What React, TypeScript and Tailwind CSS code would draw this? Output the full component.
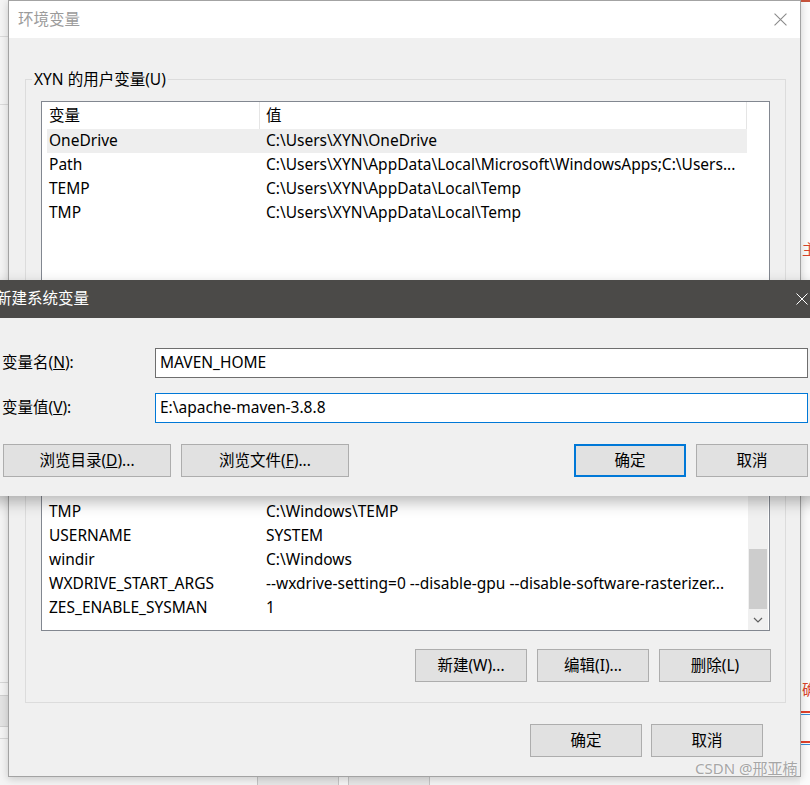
import clsx from "clsx";

const userVars = [
    {name: "OneDrive", value: "C:\\Users\\XYN\\OneDrive", selected: true},
    {name: "Path", value: "C:\\Users\\XYN\\AppData\\Local\\Microsoft\\WindowsApps;C:\\Users..."},
    {name: "TEMP", value: "C:\\Users\\XYN\\AppData\\Local\\Temp"},
    {name: "TMP", value: "C:\\Users\\XYN\\AppData\\Local\\Temp"},
];

const systemVars = [
    {name: "PROCESSOR_REVISION", value: "9a04"},
    {name: "PSModulePath", value: "%ProgramFiles%\\WindowsPowerShell\\Modules"},
    {name: "TEMP", value: "C:\\Windows\\TEMP"},
    {name: "TMP", value: "C:\\Windows\\TEMP"},
    {name: "USERNAME", value: "SYSTEM"},
    {name: "windir", value: "C:\\Windows"},
    {name: "WXDRIVE_START_ARGS", value: "--wxdrive-setting=0 --disable-gpu --disable-software-rasterizer..."},
    {name: "ZES_ENABLE_SYSMAN", value: "1"},
];

function WinButton({children, focused, className}: {children: React.ReactNode; focused?: boolean; className?: string}) {
    return (
        <div
            className={clsx(
                "flex items-center justify-center h-[33px] bg-[#e1e1e1] text-black",
                focused ? "border-2 border-[#0078d7]" : "border border-[#adadad]",
                className,
            )}
        >
            {children}
        </div>
    );
}

function Row({name, value, selected}: {name: string; value: string; selected?: boolean}) {
    return (
        <div className={clsx("flex h-[24px] shrink-0 items-center ml-[5px] w-[700px] whitespace-nowrap", selected && "bg-[#eeeeee]")}>
            <span className="w-[219px] pl-[2px] shrink-0">{name}</span>
            <span className="overflow-hidden">{value}</span>
        </div>
    );
}

function ListHeader() {
    return (
        <div className="flex h-[27px] items-center shrink-0">
            <div className="w-[218px] h-full flex items-center pl-[7px] border-r border-[#e5e5e5]">变量</div>
            <div className="w-[487px] h-full flex items-center pl-[6px] border-r border-[#e5e5e5]">值</div>
        </div>
    );
}

function GroupLabel({children}: {children: React.ReactNode}) {
    return <div className="-mt-[11px] ml-[6px] px-[2px] w-fit h-[20px] leading-[20px] bg-[#f0f0f0]">{children}</div>;
}

function CloseIcon({color, size}: {color: string; size: number}) {
    return (
        <svg width={size} height={size} viewBox="0 0 12 12">
            <path d="M0.5 0.5 L11.5 11.5 M11.5 0.5 L0.5 11.5" stroke={color} strokeWidth="1" />
        </svg>
    );
}

function Backdrop() {
    return (
        <>
            {/* left strip of the window behind */}
            <div className="absolute left-0 top-0 w-[10px] h-full bg-[#f4f4f4]">
                <div className="mt-[36px] h-px bg-[#dadada]" />
                <div className="mt-[67px] h-px bg-[#dadada]" />
                <div className="mt-[577px] h-px bg-[#d6d6d6]" />
                <div className="mt-[12px] h-[32px] bg-[#e3e3e3] border-y border-[#cfcfcf]" />
                <div className="mt-[11px] h-px bg-[#d6d6d6]" />
            </div>
            {/* right strip of the window behind */}
            <div className="absolute left-[800px] top-0 w-[10px] h-full bg-[#fbfbfb] overflow-hidden">
                <div className="h-[2px] bg-[#c8553d]" />
                <div className="mt-[240px] text-[15px] text-[#d9452b] leading-none pl-[2px] whitespace-nowrap">主</div>
                <div className="mt-[425px] text-[15px] text-[#d9452b] leading-none pl-[2px] whitespace-nowrap">确</div>
                <div className="mt-[14px] h-[2px] bg-[#e0412b]" />
                <div className="mt-[1px] h-[1px] bg-[#3c8fd8]" />
                <div className="mt-[26px] h-[2px] bg-[#e0412b]" />
                <div className="mt-[1px] h-[1px] bg-[#3c8fd8]" />
            </div>
            <div className="absolute left-[705px] top-0 w-[95px] h-[2px] bg-[#c8553d]" />
            {/* buttons of the dialog further behind */}
            <div className="absolute left-[257px] top-[776px] w-[82px] h-[24px] bg-[#e6e6e6] border border-[#c4c4c4] text-center text-[15px] text-[#555] leading-[30px] overflow-hidden">
                确定
            </div>
            <div className="absolute left-[348px] top-[776px] w-[82px] h-[24px] bg-[#e6e6e6] border border-[#c4c4c4] text-center text-[15px] text-[#555] leading-[30px] overflow-hidden">
                取消
            </div>
        </>
    );
}

function EnvDialog() {
    return (
        <div className="absolute left-[8px] top-0 w-[793px] h-[777px] border border-[#a3a3a3] bg-[#f0f0f0] flex flex-col shadow-[0_2px_8px_rgba(0,0,0,0.18)]">
            <div className="h-[37px] shrink-0 bg-white flex items-center justify-between pl-[9px] pr-[13px]">
                <span className="text-[#9b9b9b]">环境变量</span>
                <CloseIcon color="#8a8a8a" size={13} />
            </div>

            <div className="ml-[16px] mt-[41px] w-[761px] h-[315px] border border-[#dcdcdc] shrink-0">
                <GroupLabel>XYN 的用户变量(U)</GroupLabel>
                <div className="mt-[12px] ml-[15px] w-[729px] h-[220px] border border-[#828790] bg-white flex flex-col">
                    <ListHeader />
                    {userVars.map((v) => (
                        <Row key={v.name} {...v} />
                    ))}
                </div>
            </div>

            <div className="ml-[16px] mt-[16px] w-[761px] h-[293px] border border-[#dcdcdc] shrink-0 flex flex-col">
                <GroupLabel>系统变量(S)</GroupLabel>
                <div className="mt-[12px] ml-[15px] w-[729px] h-[199px] border border-[#828790] bg-white flex">
                    <div className="flex-1 flex flex-col overflow-hidden">
                        <ListHeader />
                        <div className="flex-1 flex flex-col justify-end pb-[10px] overflow-hidden">
                            {systemVars.map((v) => (
                                <Row key={v.name + v.value} {...v} />
                            ))}
                        </div>
                    </div>
                    <div className="w-[20px] mr-[1px] bg-[#f0f0f0] flex flex-col justify-end">
                        <div className="h-[60px] mx-[1px] bg-[#cdcdcd]" />
                        <div className="h-[21px] flex items-center justify-center">
                            <svg width="10" height="6" viewBox="0 0 10 6">
                                <path d="M1 1 L5 5 L9 1" stroke="#606060" strokeWidth="1.2" fill="none" />
                            </svg>
                        </div>
                    </div>
                </div>
                <div className="mt-[18px] ml-[389px] flex gap-[10px]">
                    <WinButton className="w-[112px]">新建(W)...</WinButton>
                    <WinButton className="w-[112px]">编辑(I)...</WinButton>
                    <WinButton className="w-[112px]">删除(L)</WinButton>
                </div>
            </div>

            <div className="mt-[21px] ml-[521px] flex gap-[9px]">
                <WinButton className="w-[112px]">确定</WinButton>
                <WinButton className="w-[112px]">取消</WinButton>
            </div>
        </div>
    );
}

function NewVarDialog() {
    return (
        <div className="absolute left-[-12px] top-[280px] w-[834px] h-[216px] bg-[#f0f0f0] flex flex-col shadow-[0_6px_14px_rgba(0,0,0,0.28)]">
            <div className="h-[38px] shrink-0 bg-[#4b4a48] flex items-center justify-between pl-[8px] pr-[14px]">
                <span className="text-white">新建系统变量</span>
                <CloseIcon color="#ffffff" size={12} />
            </div>

            <div className="pl-[14px] pt-[30px] flex flex-col">
                <div className="flex items-center h-[30px]">
                    <span className="w-[153px]">
                        变量名(<u>N</u>):
                    </span>
                    <div className="w-[653px] h-[30px] border border-[#6e6e6e] bg-white flex items-center pl-[4px]">
                        MAVEN_HOME
                    </div>
                </div>
                <div className="flex items-center h-[30px] mt-[15px]">
                    <span className="w-[153px]">
                        变量值(<u>V</u>):
                    </span>
                    <div className="w-[653px] h-[30px] border border-[#0078d7] bg-white flex items-center pl-[4px]">
                        E:\apache-maven-3.8.8
                    </div>
                </div>
                <div className="flex mt-[21px] ml-[1px] w-[805px]">
                    <WinButton className="w-[168px]">
                        浏览目录(<u>D</u>)...
                    </WinButton>
                    <WinButton className="w-[168px] ml-[10px]">
                        浏览文件(<u>F</u>)...
                    </WinButton>
                    <div className="flex-1" />
                    <WinButton focused className="w-[112px]">
                        确定
                    </WinButton>
                    <WinButton className="w-[112px] ml-[10px]">取消</WinButton>
                </div>
            </div>
        </div>
    );
}

export default function App() {
    return (
        <div className="relative w-[810px] h-[785px] overflow-hidden bg-[#f4f4f4] text-[15.5px] text-black font-['Noto_Sans','Noto_Sans_CJK_SC',sans-serif]">
            <Backdrop />
            <EnvDialog />
            <NewVarDialog />
            <div className="absolute left-[695px] top-[757px] text-[15px] text-[#a6a6a6] [text-shadow:0_0_2px_#fff]">
                CSDN @邢亚楠
            </div>
        </div>
    );
}
